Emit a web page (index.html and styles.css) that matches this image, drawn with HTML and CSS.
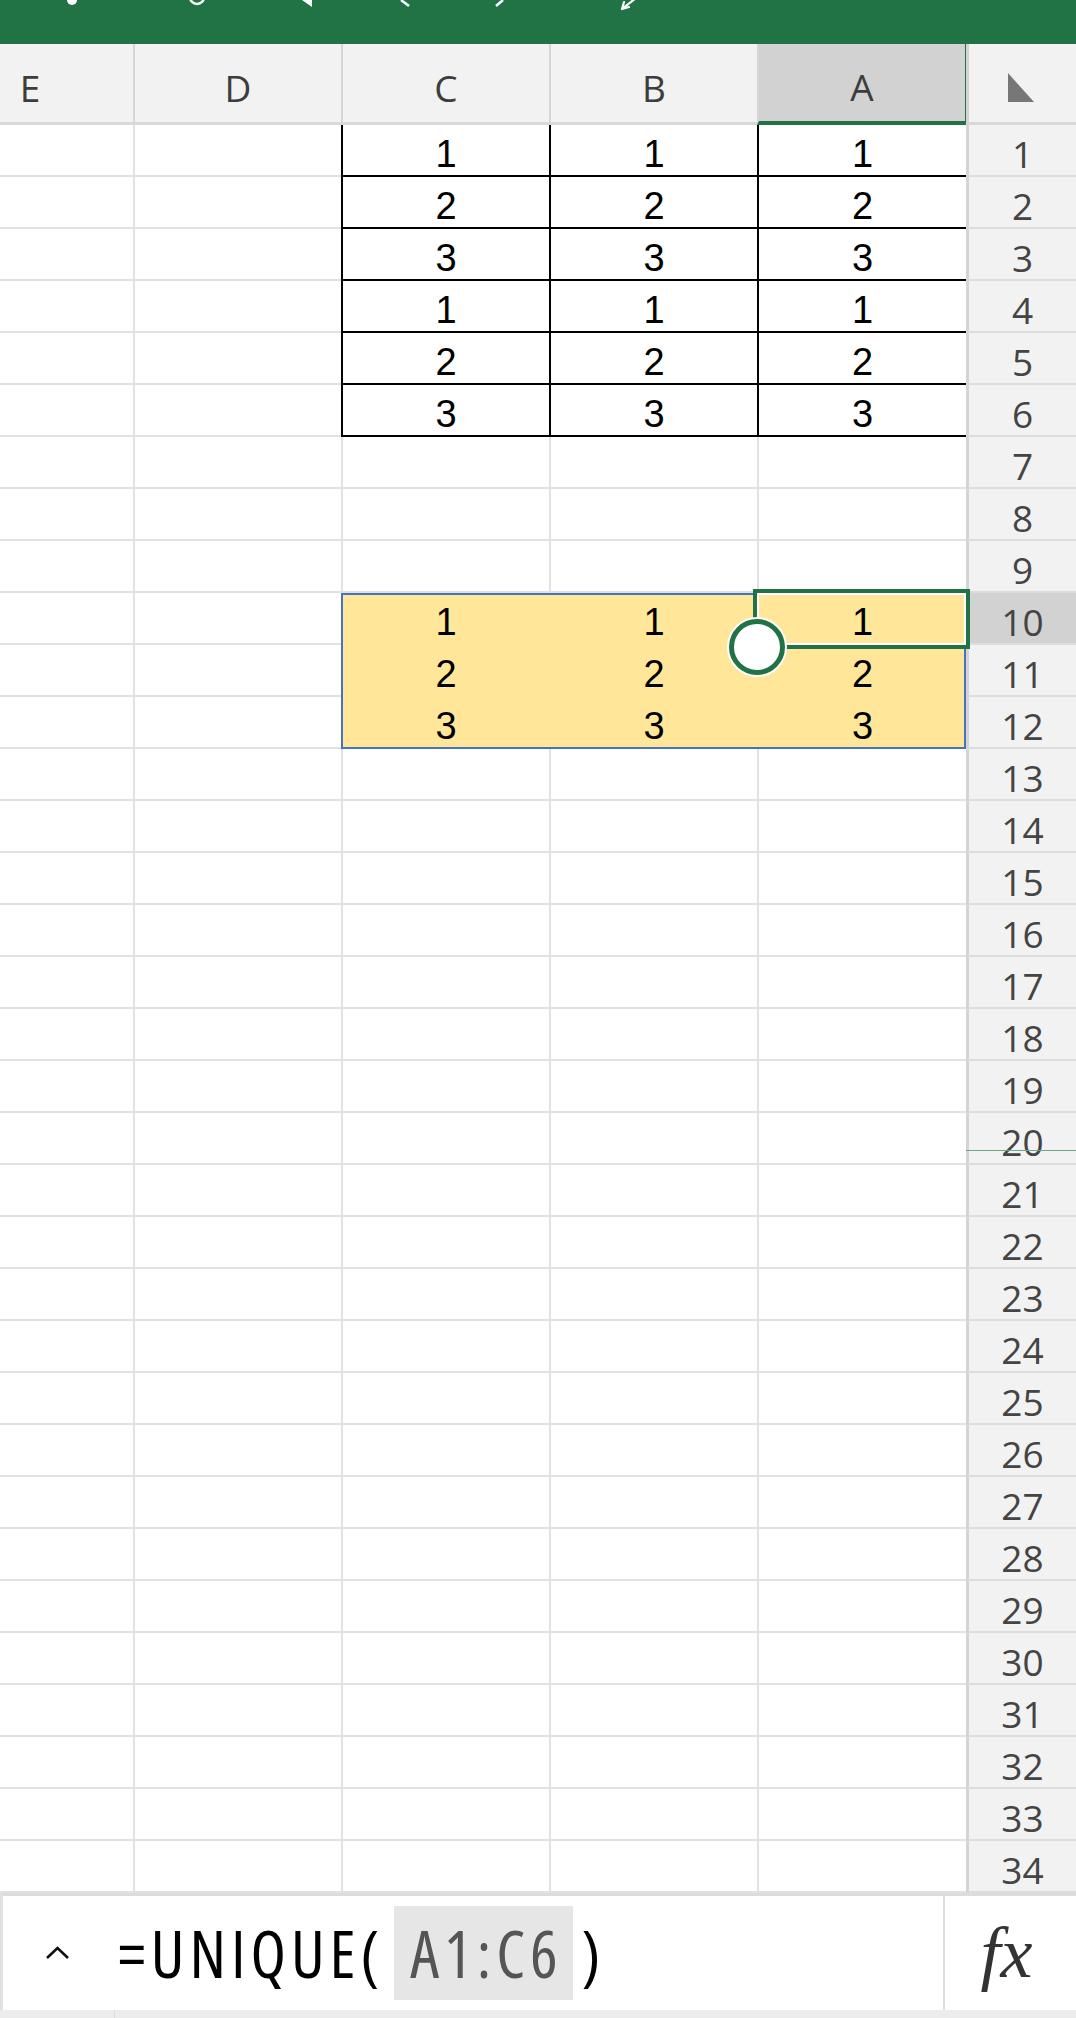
FILE: index.html
```html
<!DOCTYPE html>
<html lang="en">
<head>
<meta charset="utf-8">
<title>UNIQUE</title>
<link rel="stylesheet" href="styles.css">
</head>
<body>
<div class="app">
  <div class="topbar">
    <svg class="topicons" width="1076" height="44" viewBox="0 0 1076 44">
      <circle cx="72" cy="0" r="5" fill="#fff"/>
      <circle cx="197" cy="-3" r="7" fill="none" stroke="#fff" stroke-width="2.5"/>
      <polygon points="302,0 312,0 312,7" fill="#fff"/>
      <polyline points="401,0 409,6" fill="none" stroke="#fff" stroke-width="2.5"/>
      <polyline points="496,6 503,0" fill="none" stroke="#fff" stroke-width="2.5"/>
      <path d="M622 9 L636 -2 M622 9 L624 2 M622 9 L629 7" fill="none" stroke="#fff" stroke-width="2.2" stroke-linecap="round"/>
    </svg>
  </div>

  <div class="sheet-wrap">
    <div class="sheet">
      <div class="row">
        <div class="corner"><svg width="26" height="29" viewBox="0 0 26 29"><polygon points="0,0 0,29 26,29" fill="#777"/></svg></div>
        <div class="hd sel">A</div>
        <div class="hd">B</div>
        <div class="hd">C</div>
        <div class="hd">D</div>
        <div class="hd">E</div>
      </div>
      <div class="row"><div class="rh">1</div><div class="c t">1</div><div class="c t">1</div><div class="c t">1</div><div class="c"></div><div class="c"></div></div>
      <div class="row"><div class="rh">2</div><div class="c t">2</div><div class="c t">2</div><div class="c t">2</div><div class="c"></div><div class="c"></div></div>
      <div class="row"><div class="rh">3</div><div class="c t">3</div><div class="c t">3</div><div class="c t">3</div><div class="c"></div><div class="c"></div></div>
      <div class="row"><div class="rh">4</div><div class="c t">1</div><div class="c t">1</div><div class="c t">1</div><div class="c"></div><div class="c"></div></div>
      <div class="row"><div class="rh">5</div><div class="c t">2</div><div class="c t">2</div><div class="c t">2</div><div class="c"></div><div class="c"></div></div>
      <div class="row"><div class="rh">6</div><div class="c t">3</div><div class="c t">3</div><div class="c t">3</div><div class="c"></div><div class="c"></div></div>
      <div class="row"><div class="rh">7</div><div class="c"></div><div class="c"></div><div class="c"></div><div class="c"></div><div class="c"></div></div>
      <div class="row"><div class="rh">8</div><div class="c"></div><div class="c"></div><div class="c"></div><div class="c"></div><div class="c"></div></div>
      <div class="row"><div class="rh">9</div><div class="c"></div><div class="c"></div><div class="c"></div><div class="c"></div><div class="c"></div></div>
      <div class="row"><div class="rh on">10</div><div class="c y">1</div><div class="c y">1</div><div class="c y">1</div><div class="c"></div><div class="c"></div></div>
      <div class="row"><div class="rh">11</div><div class="c y">2</div><div class="c y">2</div><div class="c y">2</div><div class="c"></div><div class="c"></div></div>
      <div class="row"><div class="rh">12</div><div class="c y">3</div><div class="c y">3</div><div class="c y">3</div><div class="c"></div><div class="c"></div></div>
      <div class="row"><div class="rh">13</div><div class="c"></div><div class="c"></div><div class="c"></div><div class="c"></div><div class="c"></div></div>
      <div class="row"><div class="rh">14</div><div class="c"></div><div class="c"></div><div class="c"></div><div class="c"></div><div class="c"></div></div>
      <div class="row"><div class="rh">15</div><div class="c"></div><div class="c"></div><div class="c"></div><div class="c"></div><div class="c"></div></div>
      <div class="row"><div class="rh">16</div><div class="c"></div><div class="c"></div><div class="c"></div><div class="c"></div><div class="c"></div></div>
      <div class="row"><div class="rh">17</div><div class="c"></div><div class="c"></div><div class="c"></div><div class="c"></div><div class="c"></div></div>
      <div class="row"><div class="rh">18</div><div class="c"></div><div class="c"></div><div class="c"></div><div class="c"></div><div class="c"></div></div>
      <div class="row"><div class="rh">19</div><div class="c"></div><div class="c"></div><div class="c"></div><div class="c"></div><div class="c"></div></div>
      <div class="row"><div class="rh">20</div><div class="c"></div><div class="c"></div><div class="c"></div><div class="c"></div><div class="c"></div></div>
      <div class="row"><div class="rh">21</div><div class="c"></div><div class="c"></div><div class="c"></div><div class="c"></div><div class="c"></div></div>
      <div class="row"><div class="rh">22</div><div class="c"></div><div class="c"></div><div class="c"></div><div class="c"></div><div class="c"></div></div>
      <div class="row"><div class="rh">23</div><div class="c"></div><div class="c"></div><div class="c"></div><div class="c"></div><div class="c"></div></div>
      <div class="row"><div class="rh">24</div><div class="c"></div><div class="c"></div><div class="c"></div><div class="c"></div><div class="c"></div></div>
      <div class="row"><div class="rh">25</div><div class="c"></div><div class="c"></div><div class="c"></div><div class="c"></div><div class="c"></div></div>
      <div class="row"><div class="rh">26</div><div class="c"></div><div class="c"></div><div class="c"></div><div class="c"></div><div class="c"></div></div>
      <div class="row"><div class="rh">27</div><div class="c"></div><div class="c"></div><div class="c"></div><div class="c"></div><div class="c"></div></div>
      <div class="row"><div class="rh">28</div><div class="c"></div><div class="c"></div><div class="c"></div><div class="c"></div><div class="c"></div></div>
      <div class="row"><div class="rh">29</div><div class="c"></div><div class="c"></div><div class="c"></div><div class="c"></div><div class="c"></div></div>
      <div class="row"><div class="rh">30</div><div class="c"></div><div class="c"></div><div class="c"></div><div class="c"></div><div class="c"></div></div>
      <div class="row"><div class="rh">31</div><div class="c"></div><div class="c"></div><div class="c"></div><div class="c"></div><div class="c"></div></div>
      <div class="row"><div class="rh">32</div><div class="c"></div><div class="c"></div><div class="c"></div><div class="c"></div><div class="c"></div></div>
      <div class="row"><div class="rh">33</div><div class="c"></div><div class="c"></div><div class="c"></div><div class="c"></div><div class="c"></div></div>
      <div class="row"><div class="rh">34</div><div class="c"></div><div class="c"></div><div class="c"></div><div class="c"></div><div class="c"></div></div>
    </div>

    <div class="overlay">
      <div class="spill"></div>
      <div class="selbox"><div class="handle"></div></div>
      <div class="freeze"></div>
    </div>
  </div>

  <div class="fbar">
    <div class="fmain">
      <svg class="caret" width="25" height="14" viewBox="0 0 25 14"><polyline points="2,12 12.5,2 23,12" fill="none" stroke="#111" stroke-width="2.6"/></svg>
      <div class="formula">
        <span class="ftext">=UNIQUE(</span>
        <span class="ref">A1:C6</span>
        <span class="ftext close">)</span>
      </div>
    </div>
    <div class="fxbtn"><span class="fx">fx</span></div>
  </div>
  <div class="bottomstrip"><div class="bs-left"></div></div>
</div>
</body>
</html>
```

FILE: styles.css
```css
* {
  box-sizing: border-box;
  margin: 0;
  padding: 0;
}

html, body {
  width: 1076px;
  height: 2018px;
  overflow: hidden;
  background: #ffffff;
}

body {
  font-family: "Open Sans", "Noto Sans", sans-serif;
}

.app {
  display: flex;
  flex-direction: column;
  height: 2018px;
}

/* top green bar */
.topbar {
  flex: none;
  height: 44px;
  background: #217346;
}

.topicons {
  display: block;
}

/* sheet */
.sheet-wrap {
  flex: none;
  position: relative;
  height: 1849px;
  overflow: hidden;
}

.sheet,
.overlay {
  display: grid;
  direction: rtl;
  grid-template-columns: 110px 209px 208px 208px 208px 208px;
  grid-template-rows: 81px repeat(34, 52px);
}

.row {
  display: contents;
}

.corner {
  background: #f2f2f2;
  border-bottom: 3px solid #d9d9d9;
  border-left: 3px solid #d4d4d4;
  display: flex;
  align-items: center;
  justify-content: center;
  padding-top: 8px;
  padding-right: 4px;
}

.corner svg {
  display: block;
}

.hd {
  background: #f2f2f2;
  border-bottom: 3px solid #d9d9d9;
  border-left: 2px solid #d6d6d6;
  display: flex;
  align-items: center;
  justify-content: center;
  padding-top: 8px;
  font-size: 37px;
  color: #3d3d3d;
}

.hd.sel {
  background: #d2d2d2;
  border-bottom: 4px solid #217346;
  border-right: 1px solid #217346;
}

.rh {
  background: #f2f2f2;
  border-bottom: 2px solid #dcdcdc;
  border-left: 3px solid #d4d4d4;
  display: flex;
  align-items: center;
  justify-content: center;
  padding-top: 6px;
  font-size: 37px;
  color: #444444;
}

.rh.on {
  background: #d2d2d2;
}

.c {
  border-bottom: 2px solid #e1e1e1;
  border-left: 2px solid #e1e1e1;
  display: flex;
  align-items: center;
  justify-content: center;
  padding-top: 8px;
  font-family: "Liberation Sans", Arial, sans-serif;
  font-size: 38px;
  color: #000000;
}

.c.t {
  border-bottom-color: #000000;
  border-left-color: #000000;
}

.c.y {
  background: #ffe699;
  border-bottom-color: #ffe699;
  border-left-color: #ffe699;
}

/* overlays on top of the grid */
.overlay {
  position: absolute;
  inset: 0;
  pointer-events: none;
}

.spill {
  grid-row: 11 / 14;
  grid-column: 2 / 5;
  border: 2px solid #4472c4;
}

.selbox {
  grid-row: 11;
  grid-column: 2;
  margin: -4px;
  border: 4px solid #217346;
  box-shadow: inset 0 0 0 2px #ffffff;
  position: relative;
}

.handle {
  position: absolute;
  left: -28px;
  top: 26px;
  width: 56px;
  height: 56px;
  border-radius: 50%;
  border: 5px solid #217346;
  background: #ffffff;
  box-shadow: 0 0 0 2px #ffffff;
}

.freeze {
  grid-row: 21;
  grid-column: 1;
  align-self: start;
  margin-top: 37px;
  height: 1px;
  background: #6aa884;
}

/* formula bar */
.fbar {
  flex: none;
  height: 117px;
  display: flex;
  border-top: 3px solid #dcdcdc;
  border-left: 3px solid #e2e2e2;
  background: #ffffff;
}

.fmain {
  flex: 1;
  display: flex;
  align-items: center;
}

.caret {
  display: block;
  margin-left: 42px;
  flex: none;
}

.formula {
  display: flex;
  align-items: center;
  margin-left: 48px;
  font-family: "Open Sans", sans-serif;
  font-stretch: 82%;
  letter-spacing: 5px;
  font-size: 65px;
  color: #000000;
  white-space: nowrap;
}

.ref {
  display: flex;
  align-items: center;
  height: 94px;
  margin-left: 10px;
  padding: 0 10px 0 16px;
  background: #e6e6e6;
  color: #555555;
}

.close {
  margin-left: 9px;
}

.fxbtn {
  flex: none;
  width: 133px;
  border-left: 2px solid #dedede;
  display: flex;
  align-items: center;
  justify-content: center;
  padding-right: 8px;
}

.fx {
  font-family: "Liberation Serif", "DejaVu Serif", serif;
  font-style: italic;
  font-size: 72px;
  color: #333333;
}

.bottomstrip {
  flex: 1;
  background: #ececec;
  display: flex;
}

.bs-left {
  width: 115px;
  border-right: 1px solid #dddddd;
}
```
